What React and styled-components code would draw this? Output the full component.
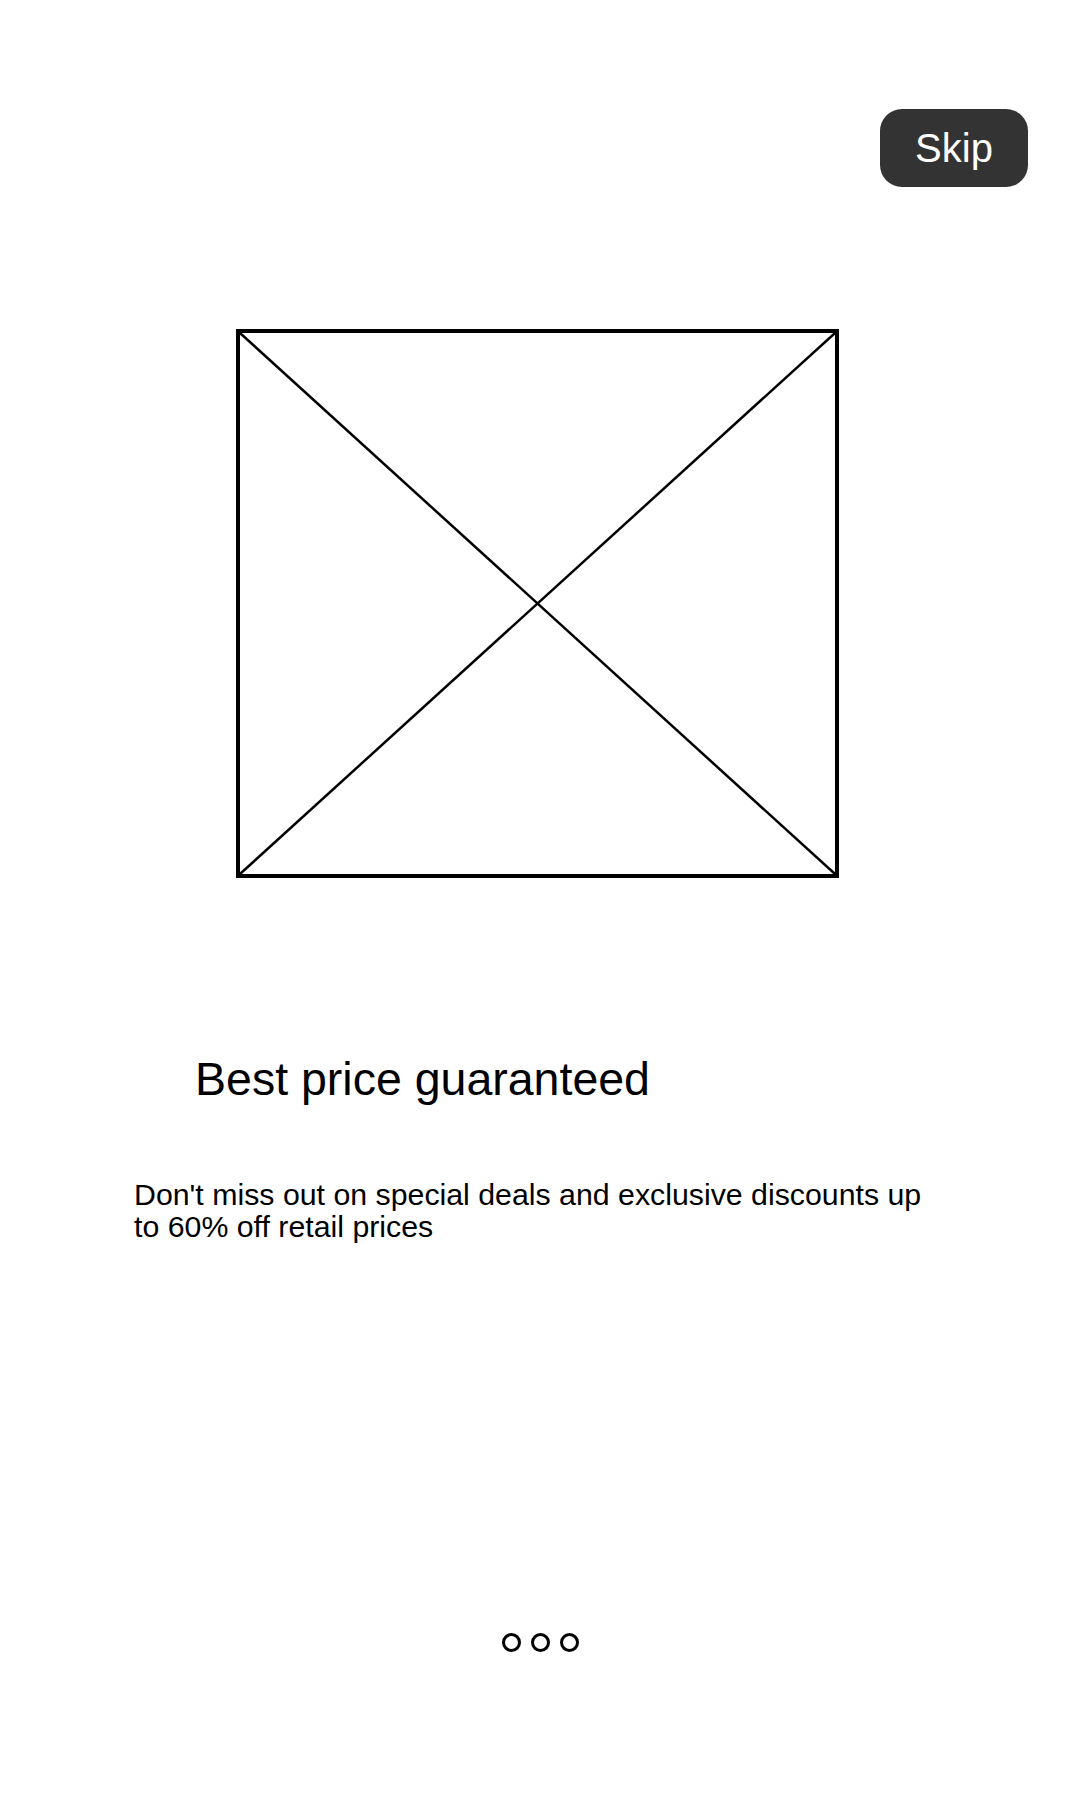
import React from 'react';
import styled, { createGlobalStyle } from 'styled-components';

const GlobalStyle = createGlobalStyle`
  body {
    margin: 0;
    background: #ffffff;
    font-family: "Liberation Sans", Arial, sans-serif;
  }
`;

const Screen = styled.div`
  width: 1080px;
  height: 1800px;
  display: flex;
  flex-direction: column;
  background: #fff;
`;

const TopBar = styled.div`
  display: flex;
  justify-content: flex-end;
  padding: 109px 52px 0 0;
`;

const SkipButton = styled.button`
  width: 148px;
  height: 78px;
  border: none;
  border-radius: 22px;
  background: #333333;
  color: #ffffff;
  font-family: "Liberation Sans", Arial, sans-serif;
  font-size: 40px;
  cursor: pointer;
`;

const Placeholder = styled.div`
  align-self: flex-start;
  margin: 142px 0 0 236px;
  width: 603px;
  height: 549px;
  box-sizing: border-box;
  border: 4px solid #000;

  svg {
    display: block;
    width: 100%;
    height: 100%;
  }
`;

const Title = styled.h1`
  margin: 175px 0 0 195px;
  font-size: 46.5px;
  font-weight: 400;
  color: #000;
  line-height: 1.15;
`;

const Description = styled.p`
  margin: 73px 0 0 134px;
  width: 806px;
  font-size: 30.3px;
  line-height: 32px;
  color: #000;
`;

const Dots = styled.div`
  display: flex;
  justify-content: center;
  gap: 10px;
  margin-top: auto;
  margin-bottom: 148px;
`;

const Dot = styled.span`
  width: 19px;
  height: 19px;
  box-sizing: border-box;
  border-radius: 50%;
  border: 3px solid #000;
  background: ${props => (props.active ? '#000' : 'transparent')};
`;

export default function App() {
  return (
    <>
      <GlobalStyle />
      <Screen>
        <TopBar>
          <SkipButton>Skip</SkipButton>
        </TopBar>
        <Placeholder>
          <svg viewBox="0 0 100 100" preserveAspectRatio="none">
            <line x1="0" y1="0" x2="100" y2="100" stroke="#000" strokeWidth="2.5" vectorEffect="non-scaling-stroke" />
            <line x1="100" y1="0" x2="0" y2="100" stroke="#000" strokeWidth="2.5" vectorEffect="non-scaling-stroke" />
          </svg>
        </Placeholder>
        <Title>Best price guaranteed</Title>
        <Description>
          Don't miss out on special deals and exclusive discounts up to 60% off retail prices
        </Description>
        <Dots>
          <Dot />
          <Dot />
          <Dot />
        </Dots>
      </Screen>
    </>
  );
}
